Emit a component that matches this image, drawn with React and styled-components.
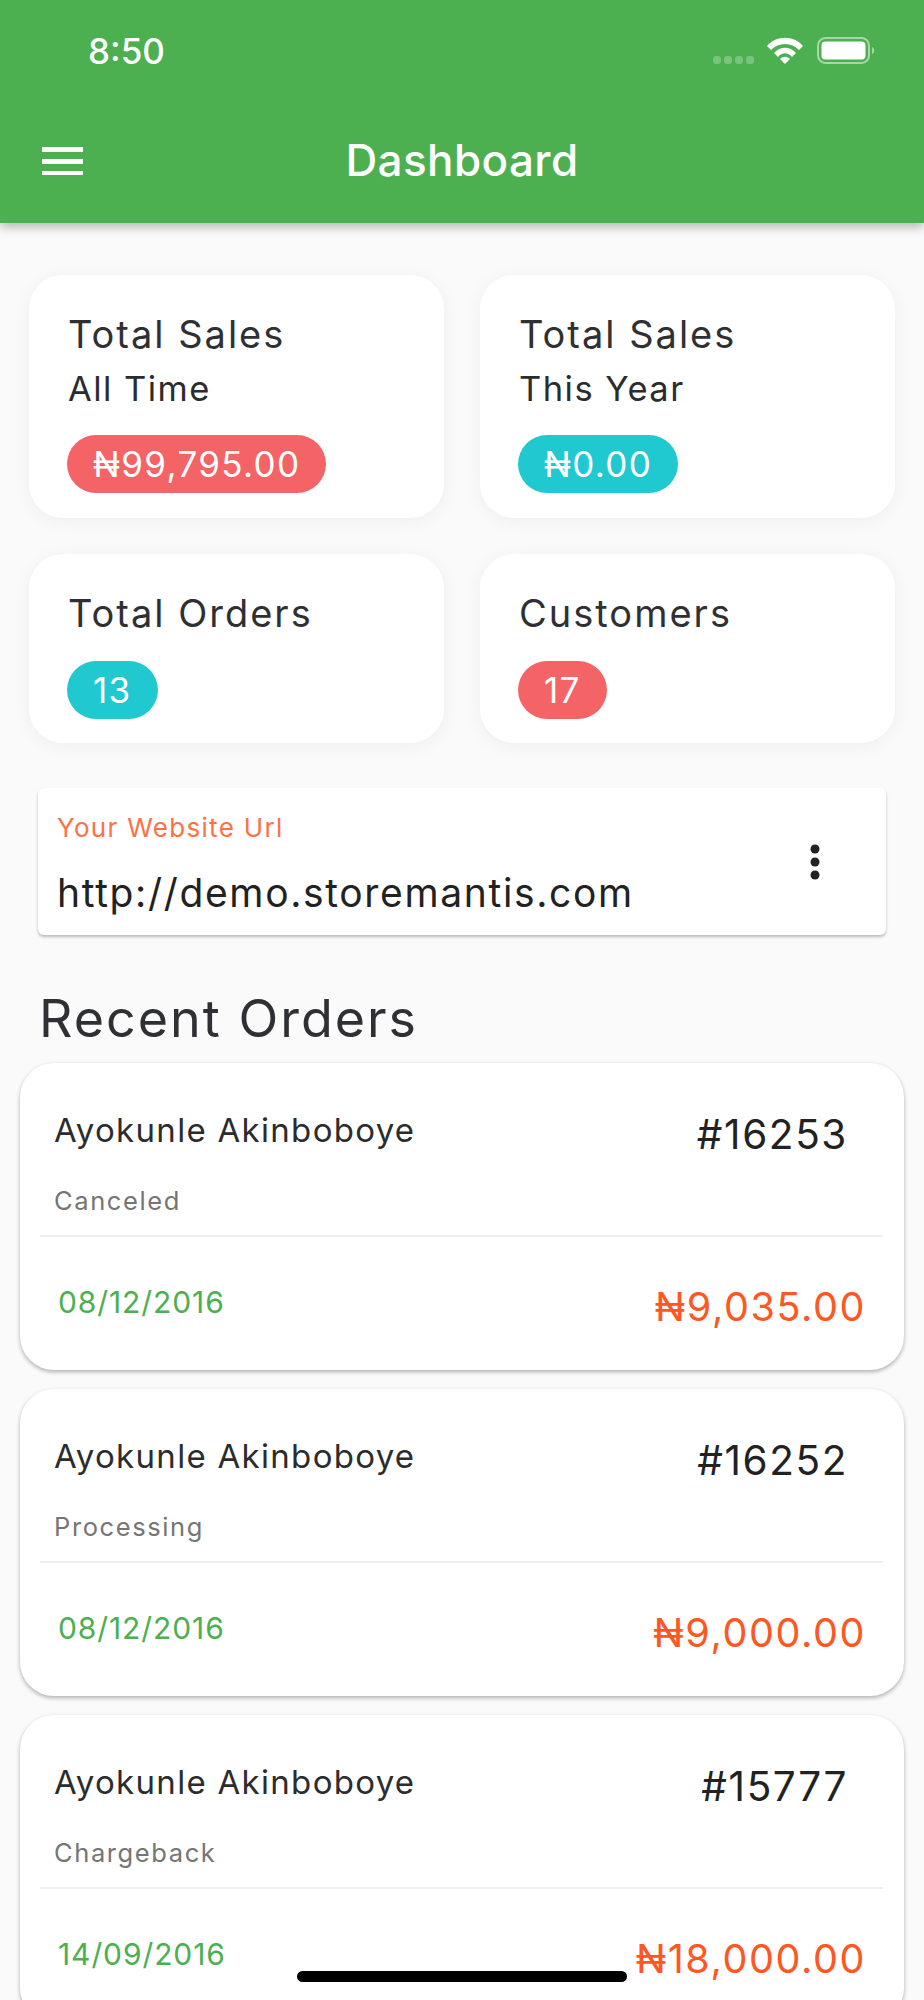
import React from 'react';
import styled, { createGlobalStyle } from 'styled-components';

const GlobalStyle = createGlobalStyle`
  html, body {
    margin: 0;
    padding: 0;
    background: #fafafa;
  }
  * {
    box-sizing: border-box;
  }
`;

const Screen = styled.div`
  position: relative;
  width: 924px;
  height: 2000px;
  overflow: hidden;
  background: #fafafa;
  font-family: Inter, "Noto Sans", sans-serif;
  color: #2f3033;
`;

const Header = styled.header`
  height: 223px;
  background: #4caf50;
  color: #fff;
  box-shadow: 0 4px 10px rgba(0, 0, 0, 0.28);
  padding: 0 42px;
`;

const StatusBar = styled.div`
  height: 100px;
  display: flex;
  align-items: center;
  justify-content: space-between;
  padding: 2px 0 0 46px;
`;

const Clock = styled.span`
  font-size: 35px;
  font-weight: 500;
`;

const StatusIcons = styled.svg`
  display: block;
  margin: -2px 5px 0 0;
`;

const AppBar = styled.div`
  height: 123px;
  position: relative;
  display: flex;
  align-items: center;
  justify-content: center;
  padding-bottom: 3px;
`;

const MenuIcon = styled.svg`
  position: absolute;
  left: 0;
  top: 47px;
`;

const Title = styled.h1`
  margin: 0;
  font-size: 44px;
  font-weight: 500;
  letter-spacing: 0.4px;
  line-height: 50px;
`;

const StatGrid = styled.section`
  display: grid;
  grid-template-columns: 415px 415px;
  grid-template-rows: 243px 189px;
  gap: 36px;
  padding: 52px 0 0 29px;
`;

const StatCard = styled.div`
  background: #fff;
  border-radius: 34px;
  box-shadow: 0 3px 18px rgba(0, 0, 0, 0.05);
  padding: 36px 0 0 39px;
  display: flex;
  flex-direction: column;
  align-items: flex-start;
`;

const StatTitle = styled.div`
  font-size: 38px;
  line-height: 46px;
  letter-spacing: 2px;
`;

const StatSub = styled.div`
  font-size: 34.500px;
  line-height: 40px;
  letter-spacing: 1.45px;
  margin: 12px 0 1px;
  color: #2b2c2e;
`;

const Pill = styled.div`
  height: 58px;
  border-radius: 29px;
  margin: 25px 0 0 -1px;
  padding: 0 26px;
  background: ${p => (p.$tone === 'teal' ? '#20c9d0' : '#f46366')};
  color: #fff;
  font-size: 35px;
  line-height: 58px;
  letter-spacing: 1.35px;
`;

const UrlCard = styled.div`
  margin: 45px 38px 0;
  height: 147px;
  background: #fff;
  border-radius: 6px;
  box-shadow: 0 2px 3px rgba(0, 0, 0, 0.25);
  padding: 0 20px 0 19px;
  display: flex;
  align-items: center;
  justify-content: space-between;
`;

const UrlText = styled.div`
  display: flex;
  flex-direction: column;
  padding-top: 6px;
`;

const UrlLabel = styled.div`
  font-size: 26px;
  line-height: 30px;
  letter-spacing: 1.3px;
  color: #ff7043;
`;

const UrlValue = styled.div`
  font-size: 39px;
  line-height: 46px;
  letter-spacing: 1.65px;
  margin-top: 27px;
  color: #222;
`;

const DotsIcon = styled.svg`
  display: block;
  margin-right: 46px;
`;

const SectionTitle = styled.h2`
  margin: 54px 0 0 39px;
  font-size: 52px;
  line-height: 60px;
  font-weight: 400;
  letter-spacing: 2px;
`;

const OrderList = styled.section`
  margin: 14px 20px 0;
  display: flex;
  flex-direction: column;
  gap: 19px;
`;

const OrderCard = styled.article`
  height: 307px;
  flex: none;
  background: #fff;
  border-radius: 34px;
  box-shadow: 0 2px 4px rgba(0, 0, 0, 0.3);
`;

const OrderTop = styled.div`
  height: 174px;
  margin: 0 21px 0 20px;
  padding: 46px 35px 0 14px;
  border-bottom: 2px solid #eeeeee;
  display: flex;
  justify-content: space-between;
  align-items: flex-start;
`;

const Customer = styled.div`
  font-size: 33px;
  line-height: 42px;
  letter-spacing: 1.3px;
  color: #2b2c2e;
`;

const OrderStatus = styled.div`
  font-size: 25.500px;
  line-height: 30px;
  letter-spacing: 1.6px;
  color: #757575;
  margin-top: 35px;
`;

const OrderNumber = styled.div`
  font-size: 40.500px;
  line-height: 46px;
  letter-spacing: 1.6px;
  color: #222;
  margin-top: 3px;
`;

const OrderBottom = styled.div`
  display: flex;
  justify-content: space-between;
  align-items: flex-start;
  padding: 46px 38px 0 38px;
`;

const OrderDate = styled.div`
  font-size: 30px;
  line-height: 38px;
  letter-spacing: 0.9px;
  color: #4caf50;
`;

const OrderTotal = styled.div`
  font-size: 39.500px;
  line-height: 48px;
  letter-spacing: 1.6px;
  color: #ff5722;
`;

const HomeBar = styled.div`
  position: absolute;
  left: 297px;
  top: 1971px;
  width: 330px;
  height: 11px;
  border-radius: 6px;
  background: #000;
`;

const stats = [
  { title: 'Total Sales', sub: 'All Time', value: '₦99,795.00', tone: 'red' },
  { title: 'Total Sales', sub: 'This Year', value: '₦0.00', tone: 'teal' },
  { title: 'Total Orders', value: '13', tone: 'teal' },
  { title: 'Customers', value: '17', tone: 'red' },
];

const orders = [
  { id: '#16253', status: 'Canceled', date: '08/12/2016', total: '₦9,035.00' },
  { id: '#16252', status: 'Processing', date: '08/12/2016', total: '₦9,000.00' },
  { id: '#15777', status: 'Chargeback', date: '14/09/2016', total: '₦18,000.00' },
];

const App = () => (
  <Screen>
    <GlobalStyle />
    <Header>
      <StatusBar>
        <Clock>8:50</Clock>
        <StatusIcons width="164" height="28" viewBox="0 0 164 28" fill="#fff">
          <g opacity="0.25">
            <rect x="0" y="20" width="8" height="8" rx="3" />
            <rect x="11" y="20" width="8" height="8" rx="3" />
            <rect x="22" y="20" width="8" height="8" rx="3" />
            <rect x="33" y="20" width="8" height="8" rx="3" />
          </g>
          <path d="M54 10C63 -1 81 -1 90 10L86 14C79 6 65 6 58 14Z" />
          <path d="M61 17C67 10 77 10 83 17L79 21C75 16 69 16 65 21Z" />
          <path d="M67 23C70 20 74 20 77 23L72 28Z" />
          <rect x="105" y="2" width="51" height="25" rx="7.500" fill="none" stroke="#fff" strokeOpacity="0.5" strokeWidth="2" />
          <rect x="108.500" y="5.500" width="44" height="18" rx="4" />
          <path d="M159 11C162 12 162 17 159 18Z" opacity="0.5" />
        </StatusIcons>
      </StatusBar>
      <AppBar>
        <MenuIcon width="41" height="28" viewBox="0 0 41 28" fill="#fff">
          <rect x="0" y="0" width="41" height="5" />
          <rect x="0" y="12" width="41" height="5" />
          <rect x="0" y="24" width="41" height="4.500" />
        </MenuIcon>
        <Title>Dashboard</Title>
      </AppBar>
    </Header>

    <StatGrid>
      {stats.map((s, i) => (
        <StatCard key={i}>
          <StatTitle>{s.title}</StatTitle>
          {s.sub && <StatSub>{s.sub}</StatSub>}
          <Pill $tone={s.tone}>{s.value}</Pill>
        </StatCard>
      ))}
    </StatGrid>

    <UrlCard>
      <UrlText>
        <UrlLabel>Your Website Url</UrlLabel>
        <UrlValue>http://demo.storemantis.com</UrlValue>
      </UrlText>
      <DotsIcon width="10" height="36" viewBox="0 0 10 36" fill="#222">
        <circle cx="5" cy="5" r="4.500" />
        <circle cx="5" cy="18" r="4.500" />
        <circle cx="5" cy="31" r="4.500" />
      </DotsIcon>
    </UrlCard>

    <SectionTitle>Recent Orders</SectionTitle>

    <OrderList>
      {orders.map(o => (
        <OrderCard key={o.id}>
          <OrderTop>
            <div>
              <Customer>Ayokunle Akinboboye</Customer>
              <OrderStatus>{o.status}</OrderStatus>
            </div>
            <OrderNumber>{o.id}</OrderNumber>
          </OrderTop>
          <OrderBottom>
            <OrderDate>{o.date}</OrderDate>
            <OrderTotal>{o.total}</OrderTotal>
          </OrderBottom>
        </OrderCard>
      ))}
    </OrderList>

    <HomeBar />
  </Screen>
);

export default App;
